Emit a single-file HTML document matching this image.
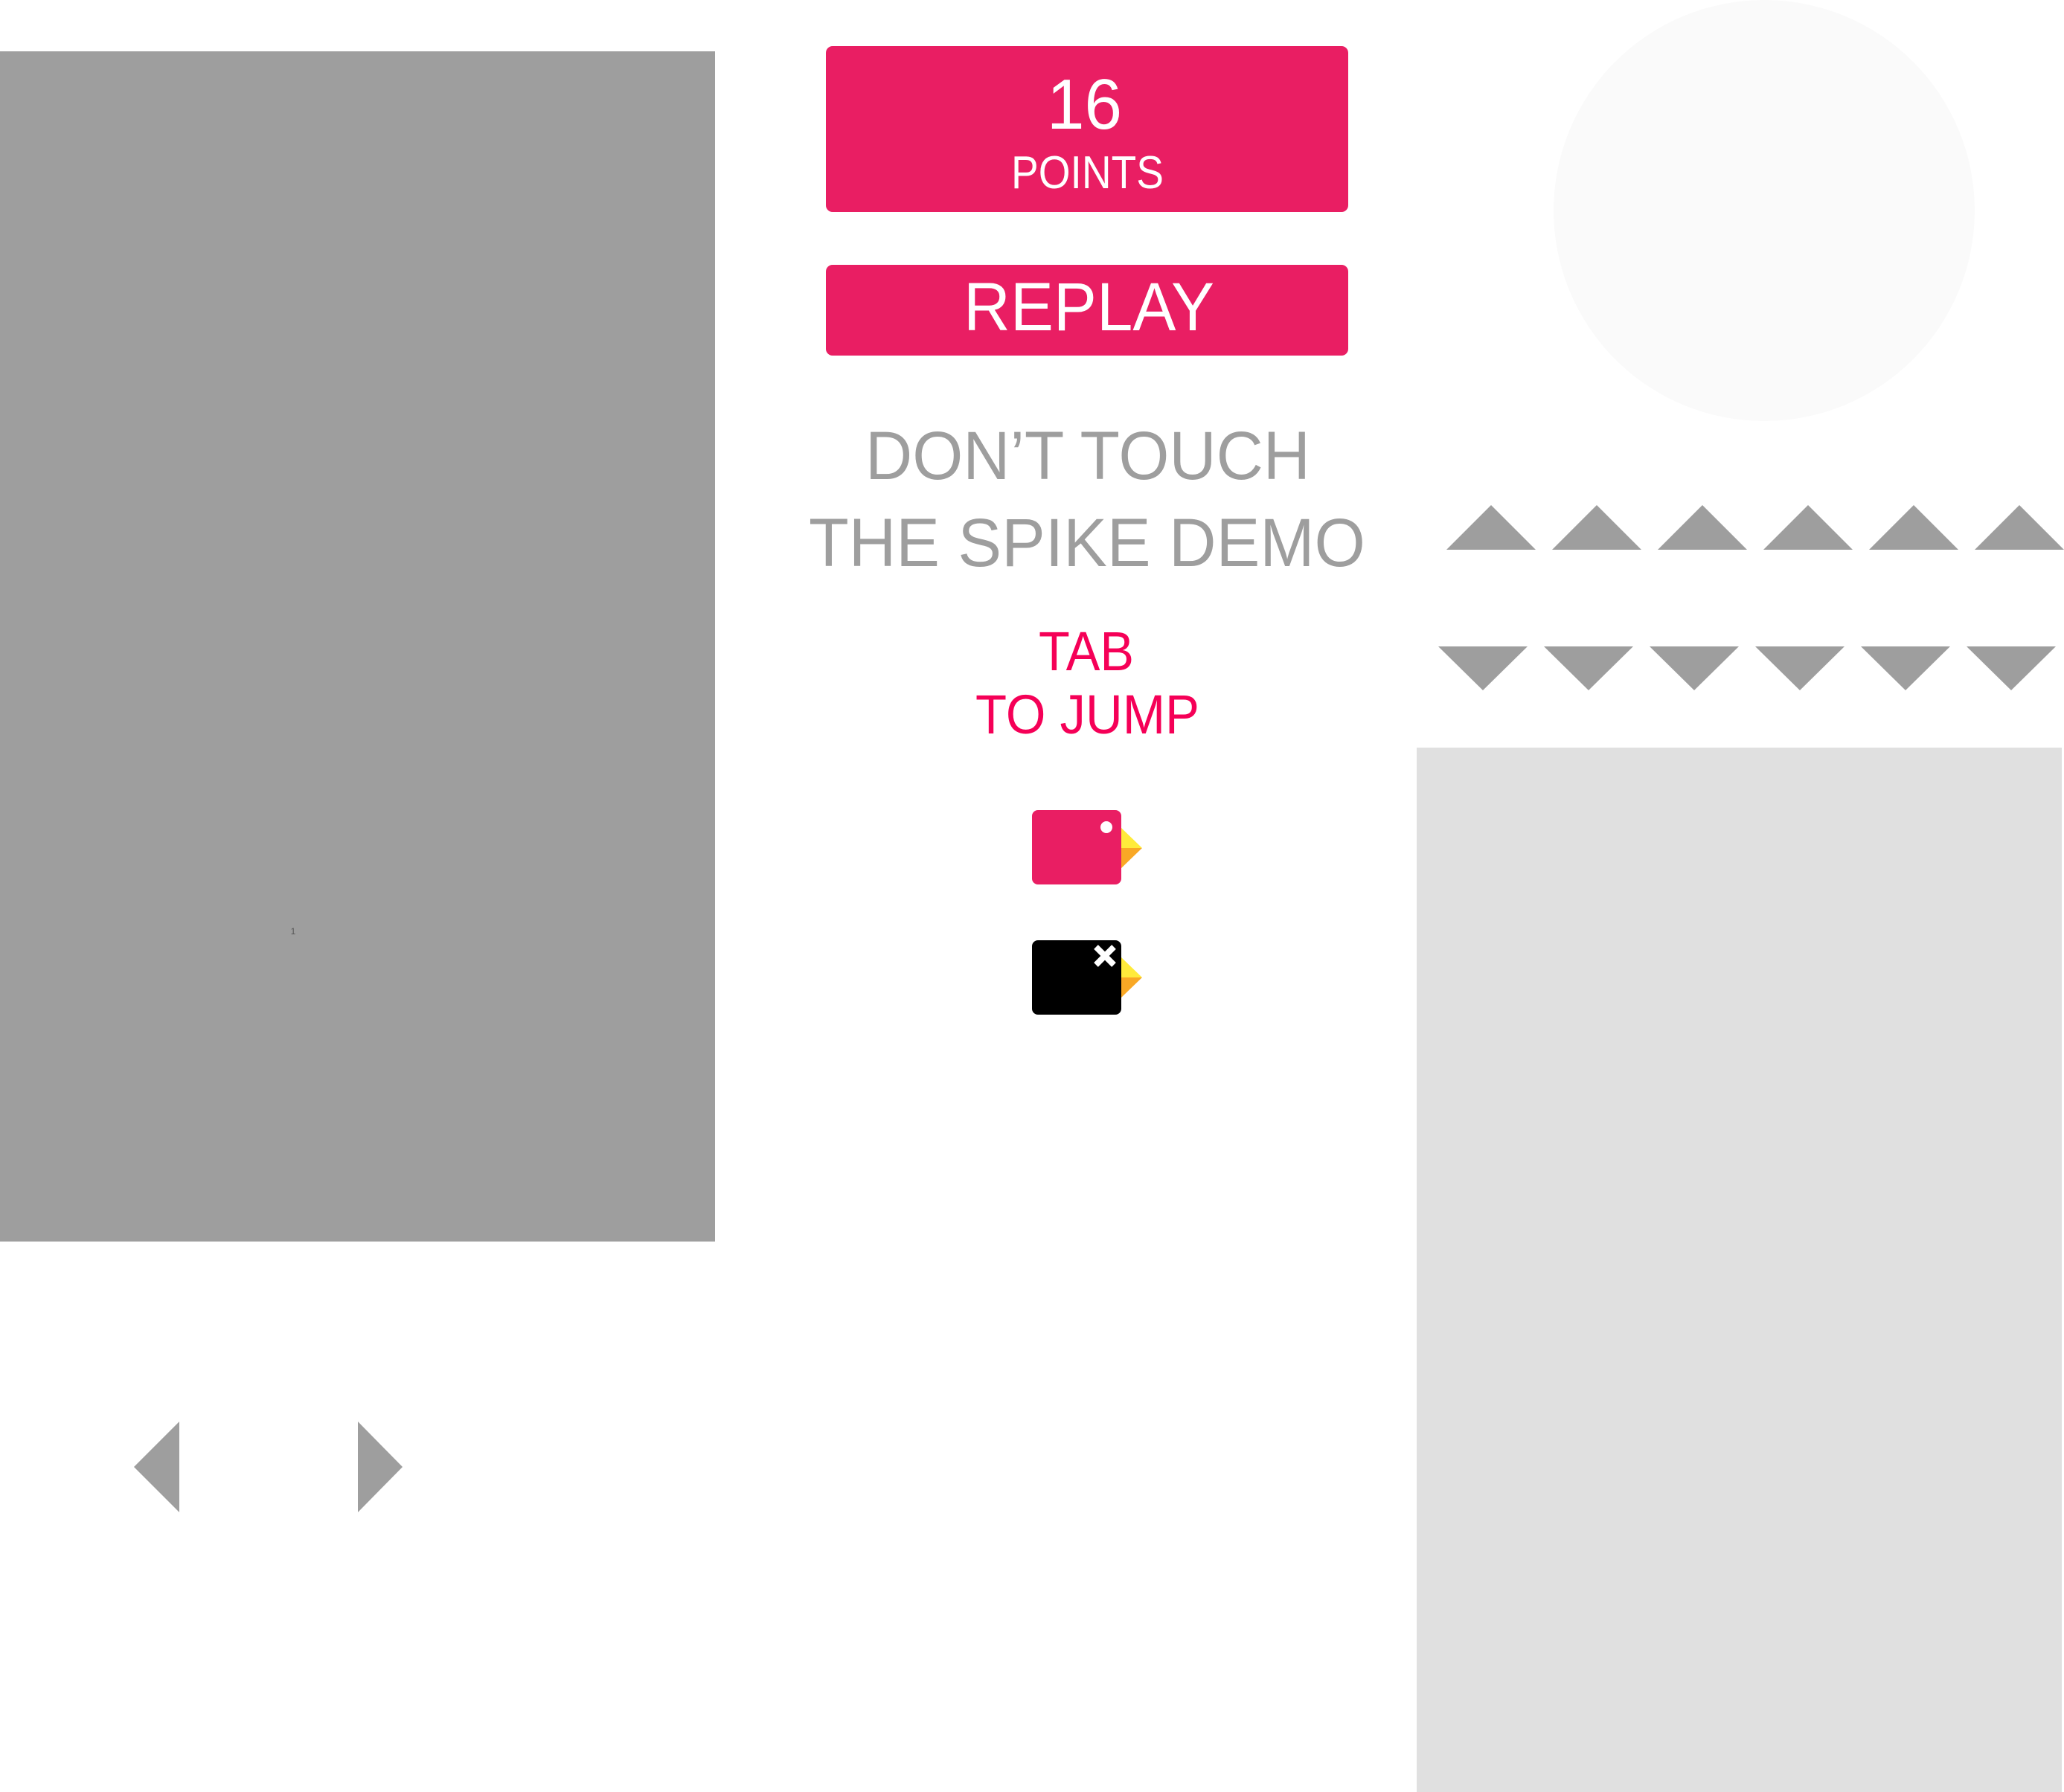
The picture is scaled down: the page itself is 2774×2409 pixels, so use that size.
<!DOCTYPE html>
<html><head><meta charset="utf-8"><style>
html,body{margin:0;padding:0;background:#fff;width:2774px;height:2409px;overflow:hidden}
svg{display:block}
text{font-family:"Liberation Sans",sans-serif}
</style></head><body>
<svg width="2774" height="2409" viewBox="0 0 2774 2409" xmlns="http://www.w3.org/2000/svg">
<rect x="0" y="69" width="961" height="1600" fill="#9e9e9e"/>
<text x="394" y="1256" font-size="12" fill="#555" text-anchor="middle">1</text>
<circle cx="2371" cy="283" r="283" fill="#fafafa"/>
<rect x="1904" y="1005" width="867" height="1404" fill="#e0e0e0"/>
<rect x="1110" y="62" width="702" height="223" rx="9" fill="#e91e63"/>
<text x="1407" y="173" font-size="96" fill="#fff" textLength="101" lengthAdjust="spacingAndGlyphs">16</text>
<text x="1359" y="253" font-size="62" fill="#fff" textLength="205" lengthAdjust="spacingAndGlyphs">POINTS</text>
<rect x="1110" y="356" width="702" height="122" rx="9" fill="#e91e63"/>
<text x="1295" y="444" font-size="92" fill="#fff" textLength="337" lengthAdjust="spacingAndGlyphs">REPLAY</text>
<text x="1163" y="644" font-size="92" fill="#9e9e9e" textLength="598" lengthAdjust="spacingAndGlyphs">DON’T TOUCH</text>
<text x="1087" y="761" font-size="92" fill="#9e9e9e" textLength="748" lengthAdjust="spacingAndGlyphs">THE SPIKE DEMO</text>
<text x="1396" y="901" font-size="74" fill="#f50057" textLength="128" lengthAdjust="spacingAndGlyphs">TAB</text>
<text x="1311" y="986" font-size="74" fill="#f50057" textLength="301" lengthAdjust="spacingAndGlyphs">TO JUMP</text>
<g fill="#9e9e9e">
<path d="M1944 739L2004 679L2064 739Z"/><path d="M2086 739L2146 679L2206 739Z"/><path d="M2228 739L2288 679L2348 739Z"/><path d="M2370 739L2430 679L2490 739Z"/><path d="M2512 739L2572 679L2632 739Z"/><path d="M2654 739L2714 679L2774 739Z"/>
<path d="M1933 869L1993 928L2053 869Z"/><path d="M2075 869L2135 928L2195 869Z"/><path d="M2217 869L2277 928L2337 869Z"/><path d="M2359 869L2419 928L2479 869Z"/><path d="M2501 869L2561 928L2621 869Z"/><path d="M2643 869L2703 928L2763 869Z"/>
<path d="M180 1972L241 1911L241 2033Z"/><path d="M541 1972L481 1911L481 2033Z"/>
</g>
<path d="M1506 1112L1535 1140L1506 1140Z" fill="#ffeb3b"/>
<path d="M1506 1140L1535 1140L1506 1168Z" fill="#f9a825"/>
<rect x="1387" y="1089" width="120" height="100" rx="8" fill="#e91e63"/>
<circle cx="1487" cy="1112" r="8" fill="#fff"/>
<path d="M1506 1286L1535 1314L1506 1314Z" fill="#ffeb3b"/>
<path d="M1506 1314L1535 1314L1506 1342Z" fill="#f9a825"/>
<rect x="1387" y="1264" width="120" height="100" rx="8" fill="#000"/>
<g stroke="#fff" stroke-width="8"><path d="M1473 1273L1497 1297M1497 1273L1473 1297"/></g>
</svg>
</body></html>
